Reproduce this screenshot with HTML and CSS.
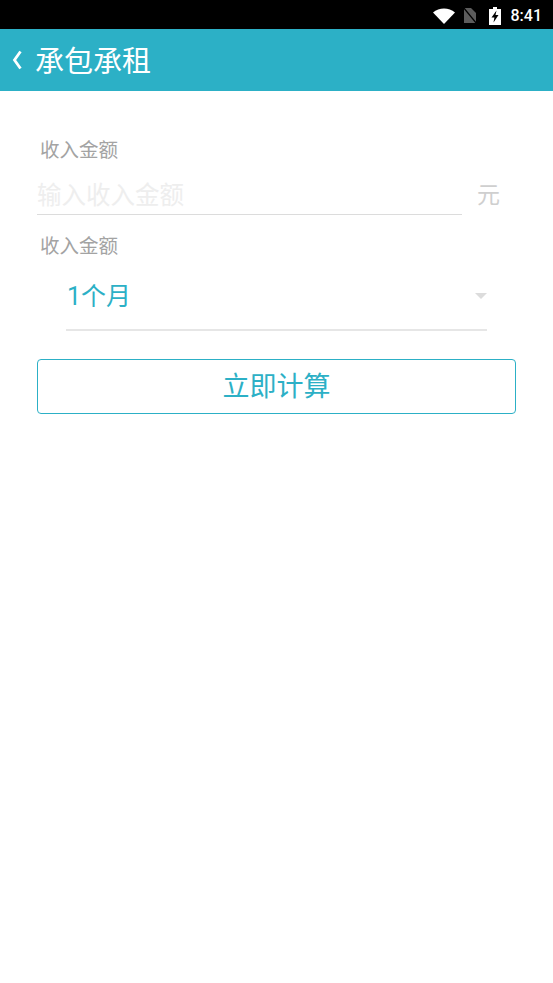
FILE: index.html
```html
<!DOCTYPE html>
<html lang="zh-CN">
<head>
  <meta charset="UTF-8">
  <meta name="viewport" content="width=device-width, initial-scale=1.0">
  <title>承包承租</title>
  <link rel="stylesheet" href="styles.css">
</head>
<body>

  <div class="status-bar">
    <svg class="icon-wifi" width="22" height="16" viewBox="0 0 22 16">
      <path d="M0 4.5 C6 -1 16 -1 22 4.5 L11 16 Z" fill="#fff"/>
    </svg>
    <svg class="icon-sim" width="14" height="17" viewBox="0 0 14 17">
      <path d="M1 1 H8 L13 6 V16 H1 Z" fill="#5c5c5c"/>
      <path d="M0 0 L14 17" stroke="#000" stroke-width="1.4"/>
    </svg>
    <svg class="icon-battery" width="12" height="18" viewBox="0 0 12 18">
      <path d="M4 0 H8 V2 H12 V18 H0 V2 H4 Z" fill="#fff"/>
      <path d="M7.5 3.5 L2.5 10.5 H5.4 L4.5 15.5 L9.5 8 H6.5 Z" fill="#000"/>
    </svg>
    <span class="clock">8:41</span>
  </div>

  <div class="app-bar">
    <svg class="back" width="12" height="20" viewBox="0 0 12 20">
      <path d="M9.5 1.5 L3.5 10 L9.5 18.5" fill="none" stroke="#fff" stroke-width="2.8"/>
    </svg>
    <h1 class="title">承包承租</h1>
  </div>

  <div class="form">
    <div class="label">收入金额</div>
    <div class="amount-row">
      <input class="amount-input" type="text" placeholder="输入收入金额">
      <span class="unit">元</span>
    </div>

    <div class="label label-second">收入金额</div>
    <div class="select">
      <span class="select-value">1个月</span>
      <span class="caret"></span>
    </div>

    <button class="calc-btn" type="button">立即计算</button>
  </div>

</body>
</html>
```

FILE: styles.css
```css
* {
  margin: 0;
  padding: 0;
  box-sizing: border-box;
}

body {
  font-family: "Roboto", "Noto Sans CJK SC", sans-serif;
  background-color: #fff;
  width: 553px;
  height: 983px;
  overflow: hidden;
}

/* Barra de status */
.status-bar {
  height: 29px;
  background-color: #000;
  display: flex;
  align-items: center;
  justify-content: flex-end;
  padding-top: 2px;
  padding-right: 11px;
}

.icon-wifi {
  margin-right: 8px;
}

.icon-sim {
  margin-right: 12px;
}

.icon-battery {
  margin-right: 10px;
}

.clock {
  color: #fff;
  font-size: 16px;
  font-weight: 500;
}

/* Barra do app */
.app-bar {
  height: 62px;
  background-color: #2cb0c6;
  display: flex;
  align-items: center;
  padding-left: 11px;
}

.back {
  margin-right: 12px;
}

.title {
  color: #fff;
  font-size: 29px;
  font-weight: 400;
  line-height: 1;
  padding-top: 4px;
}

/* Formulário */
.form {
  padding: 47px 37px 0;
}

.label {
  color: #a3a3a3;
  font-size: 19.5px;
  line-height: 26px;
  padding-left: 3px;
}

.amount-row {
  display: flex;
  height: 52px;
  margin-top: 4px;
}

.amount-input {
  width: 425px;
  height: 47px;
  border: none;
  border-bottom: 1px solid #dcdcdc;
  outline: none;
  padding-top: 9px;
  font-family: inherit;
  font-size: 24.5px;
  color: #333;
  background: transparent;
}

.amount-input::placeholder {
  color: #eeeeee;
  opacity: 1;
}

.unit {
  color: #cfcfcf;
  font-size: 23px;
  line-height: 55px;
  margin-left: 15px;
}

.label-second {
  margin-top: 14px;
}

.select {
  display: flex;
  align-items: center;
  justify-content: space-between;
  width: 421px;
  height: 71px;
  margin-left: 29px;
  border-bottom: 2px solid #e6e6e6;
}

.select-value {
  color: #2cb0c6;
  font-size: 25px;
  margin-left: 1px;
  margin-bottom: 2px;
}

.caret {
  width: 0;
  height: 0;
  margin-top: 2px;
  border-left: 6px solid transparent;
  border-right: 6px solid transparent;
  border-top: 6px solid #dcdcdc;
}

.calc-btn {
  display: block;
  width: 479px;
  height: 55px;
  margin-top: 28px;
  padding-bottom: 4px;
  background-color: #fff;
  border: 1px solid #2cb0c6;
  border-radius: 4px;
  color: #2cb0c6;
  font-family: inherit;
  font-size: 27px;
}
```
